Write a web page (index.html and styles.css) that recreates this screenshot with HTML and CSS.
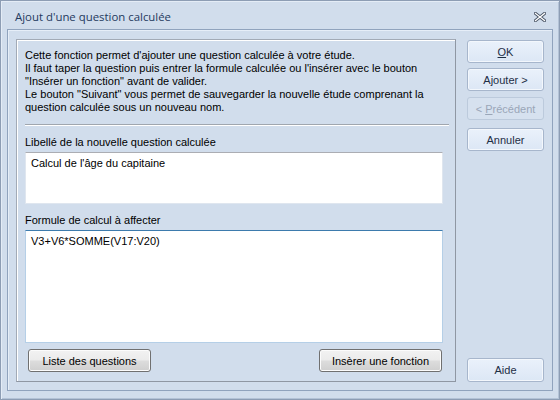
FILE: index.html
```html
<!DOCTYPE html>
<html lang="fr">
<head>
<meta charset="utf-8">
<title>Ajout d'une question calculée</title>
<link rel="stylesheet" href="styles.css">
</head>
<body>
<div class="window">
  <div class="titlebar">
    <span class="title">Ajout d'une question calculée</span>
    <svg class="close" width="12" height="10" viewBox="0 0 12 10">
      <path d="M1.5 1.5 L10.5 8.5 M10.5 1.5 L1.5 8.5" stroke="#4a5566" stroke-width="3.2" stroke-linecap="square" fill="none"/>
      <path d="M1.5 1.5 L10.5 8.5 M10.5 1.5 L1.5 8.5" stroke="#ffffff" stroke-width="1.3" stroke-linecap="square" fill="none"/>
    </svg>
  </div>
  <div class="client">
    <div class="panel">
      <div class="intro">
        Cette fonction permet d'ajouter une question calculée à votre étude.<br>
        Il faut taper la question puis entrer la formule calculée ou l'insérer avec le bouton<br>
        "Insérer un fonction" avant de valider.<br>
        Le bouton "Suivant" vous permet de sauvegarder la nouvelle étude comprenant la<br>
        question calculée sous un nouveau nom.
      </div>
      <div class="sep"></div>
      <label class="lbl">Libellé de la nouvelle question calculée</label>
      <div class="textbox tb-small">Calcul de l'âge du capitaine</div>
      <label class="lbl">Formule de calcul à affecter</label>
      <div class="textbox tb-large focused">V3+V6*SOMME(V17:V20)</div>
      <div class="bottom-row">
        <button class="gbtn">Liste des questions</button>
        <button class="gbtn">Insèrer une fonction</button>
      </div>
    </div>
    <div class="side">
      <button class="bbtn b-ok"><u>O</u>K</button>
      <button class="bbtn b-add">Ajouter &gt;</button>
      <button class="bbtn b-prev disabled">&lt; <u>P</u>récédent</button>
      <button class="bbtn">Annuler</button>
      <div class="spacer"></div>
      <button class="bbtn b-help">Aide</button>
    </div>
  </div>
</div>
</body>
</html>
```

FILE: styles.css
```css
html, body {
  margin: 0;
  padding: 0;
}
body {
  width: 560px;
  height: 400px;
  overflow: hidden;
  font-family: "Liberation Sans", Arial, sans-serif;
  font-size: 11px;
  color: #000;
}
.window {
  box-sizing: border-box;
  width: 560px;
  height: 400px;
  background: #d1ddec;
  border: 1px solid #8d9db4;
  box-shadow: inset 1px 1px 0 #e4ecf6, inset -1px -1px 0 #b3c2d6;
  display: flex;
  flex-direction: column;
}
.titlebar {
  height: 28px;
  display: flex;
  align-items: center;
  justify-content: space-between;
  padding: 0 13px 0 14px;
  box-sizing: border-box;
}
.title {
  font-family: "Open Sans", "Liberation Sans", sans-serif;
  font-size: 11.4px;
  color: #1f3a5e;
  padding-top: 2px;
}
.close {
  margin-top: 3px;
}
.client {
  margin: 0 6px;
  height: 362px;
  box-sizing: border-box;
  border: 1px solid #90a3bd;
  box-shadow: inset 1px 1px 0 #e6eef8;
  display: flex;
  padding: 9px 7px 8px 8px;
  gap: 11px;
}
.panel {
  width: 440px;
  box-sizing: border-box;
  border: 1px solid #a2aab6;
  border-right-color: #8f97a3;
  border-bottom-color: #8f97a3;
  box-shadow: inset 1px 1px 0 #ffffff;
  display: flex;
  flex-direction: column;
  padding: 8px 6px 9px 8px;
}
.intro {
  line-height: 13px;
  padding-top: 1px;
  white-space: nowrap;
}
.sep {
  margin-top: 10px;
  height: 1px;
  background: #a0a6ae;
  border-bottom: 1px solid #ffffff;
}
.lbl {
  display: block;
  line-height: 13px;
  margin-top: 10px;
  margin-bottom: 3px;
}
.textbox {
  background: #fff;
  box-sizing: border-box;
  width: 418px;
  border: 1px solid #dfe6ef;
  border-top-color: #abadb3;
  padding: 4px 5px;
  line-height: 13px;
}
.tb-small {
  height: 52px;
}
.tb-large {
  height: 113px;
}
.focused {
  border-color: #b5cfe7;
  border-top-color: #3d7bad;
}
.bottom-row {
  display: flex;
  justify-content: space-between;
  width: 414px;
  margin-top: 6px;
  padding-left: 3px;
}
.gbtn {
  font-family: inherit;
  font-size: 11px;
  color: #000;
  height: 23px;
  width: 123px;
  border: 1px solid #707070;
  border-radius: 3px;
  background: linear-gradient(#f2f2f2 0%, #ebebeb 48%, #dddddd 52%, #cfcfcf 100%);
  box-shadow: inset 0 0 0 1px #fcfcfc;
  padding: 0;
}
.side {
  width: 77px;
  display: flex;
  flex-direction: column;
  padding-top: 1px;
}
.bbtn {
  font-family: inherit;
  font-size: 11px;
  color: #1e2e45;
  height: 23px;
  width: 77px;
  border: 1px solid #a7b6cc;
  border-radius: 3px;
  background: linear-gradient(#eaf1fb, #dce7f5);
  box-shadow: inset 0 0 0 1px #f3f7fc;
  padding: 0;
}
.b-ok {
  margin-bottom: 5px;
}
.b-add {
  margin-bottom: 6px;
}
.b-prev {
  margin-bottom: 8px;
}
.bbtn.disabled {
  color: #9aa6b8;
  border-color: #bccadc;
  background: #d6e1ef;
  box-shadow: none;
}
.spacer {
  flex: 1;
}
.b-help {
  height: 24px;
}
```
